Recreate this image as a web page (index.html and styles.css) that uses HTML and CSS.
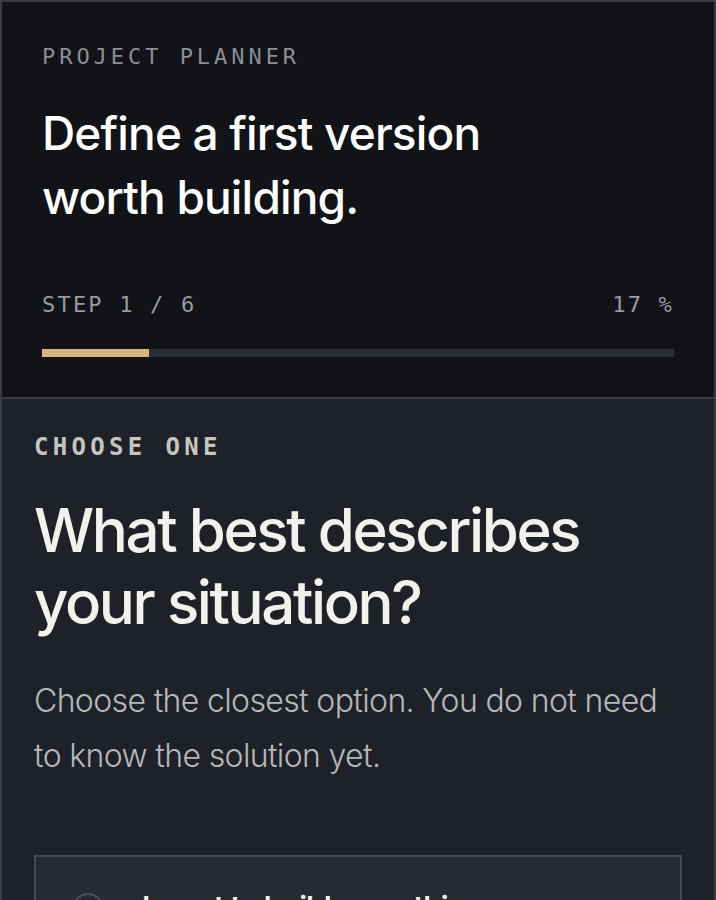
FILE: index.html
```html
<!DOCTYPE html>
<html lang="en">
<head>
<meta charset="utf-8">
<title>Project Planner</title>
<link rel="stylesheet" href="styles.css">
</head>
<body>
<main class="planner">
  <header class="hero">
    <p class="eyebrow">PROJECT PLANNER</p>
    <h1 class="hero-title">Define a first version<br>worth building.</h1>
    <div class="step-row">
      <span>STEP 1 / 6</span>
      <span>17 %</span>
    </div>
    <div class="progress"><div class="progress-fill" style="width:17%"></div></div>
  </header>
  <section class="question">
    <p class="kicker">CHOOSE ONE</p>
    <h2 class="question-title">What best describes<br>your situation?</h2>
    <p class="question-lead">Choose the closest option. You do not need to know the solution yet.</p>
    <div class="options">
      <label class="option">
        <span class="radio"></span>
        <span class="option-text">I want to build something new</span>
      </label>
    </div>
  </section>
</main>
</body>
</html>
```

FILE: styles.css
```css
* { box-sizing: border-box; }
html, body { margin: 0; padding: 0; background: #1e2128; }
body { font-family: Inter, "Noto Sans", sans-serif; }

.planner {
  width: 716px;
  min-height: 900px;
  border: 2px solid #3a3d43;
  border-bottom: none;
  background: #1e2128;
}

.hero {
  background: #111317;
  padding: 41px 40px 40px;
  border-bottom: 2px solid #3a3d43;
}

.eyebrow {
  margin: 0;
  font-family: "DejaVu Sans Mono", monospace;
  font-size: 22px;
  line-height: 28px;
  letter-spacing: 0.18em;
  color: #8d8f93;
}

.hero-title {
  margin: 30px 0 0;
  font-size: 46px;
  line-height: 64px;
  font-weight: 500;
  letter-spacing: -0.018em;
  color: #ffffff;
}

.step-row {
  margin-top: 62px;
  display: flex;
  justify-content: space-between;
  font-family: "DejaVu Sans Mono", monospace;
  font-size: 22px;
  line-height: 28px;
  letter-spacing: 0.1em;
  color: #9a9b9e;
}

.progress {
  margin-top: 30px;
  height: 8px;
  background: #2a2d32;
}
.progress-fill {
  height: 100%;
  background: #d4b880;
}

.question {
  padding: 33px 32px 0;
}

.kicker {
  margin: 0;
  font-family: "DejaVu Sans Mono", monospace;
  font-weight: 700;
  font-size: 24px;
  line-height: 30px;
  letter-spacing: 0.18em;
  color: #c6c6c1;
}

.question-title {
  margin: 32px 0 0;
  font-size: 60px;
  line-height: 72px;
  font-weight: 500;
  letter-spacing: -0.04em;
  color: #f3f1eb;
}

.question-lead {
  margin: 35px 0 0;
  font-size: 32px;
  line-height: 55px;
  font-weight: 300;
  letter-spacing: -0.02em;
  color: #b7b8b8;
}

.options {
  margin-top: 72px;
}

.option {
  display: flex;
  align-items: flex-start;
  gap: 38px;
  padding: 36px;
  background: #262a31;
  border: 2px solid #454950;
}

.radio {
  flex: none;
  width: 32px;
  height: 32px;
  border: 2px solid #4d5159;
  border-radius: 50%;
}

.option-text {
  font-size: 30px;
  line-height: 28px;
  font-weight: 600;
  letter-spacing: -0.03em;
  color: #f3f1eb;
}
```
